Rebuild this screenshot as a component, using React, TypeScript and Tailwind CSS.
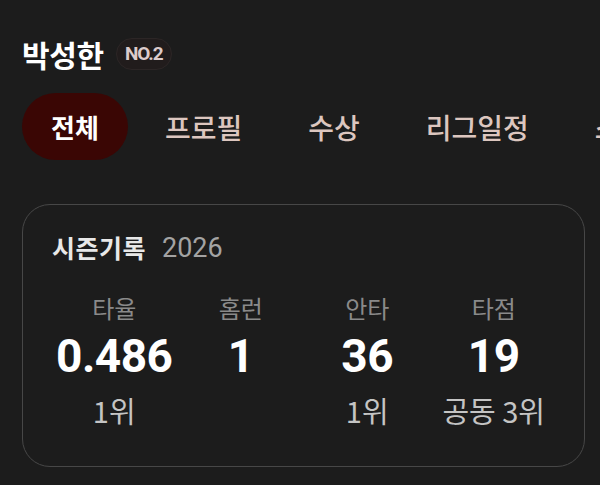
const tabs = ["전체", "프로필", "수상", "리그일정", "스탯"];

const stats = [
  { label: "타율", value: "0.486", rank: "1위" },
  { label: "홈런", value: "1", rank: "" },
  { label: "안타", value: "36", rank: "1위" },
  { label: "타점", value: "19", rank: "공동 3위" },
];

export default function App() {
  return (
    <div
      className="w-[600px] h-[485px] overflow-hidden bg-[#1c1c1c] text-white"
      style={{ fontFamily: '"Noto Sans CJK KR", Roboto, sans-serif' }}
    >
      {/* player header */}
      <div className="flex items-center gap-[12px] pl-[22px] pt-[34px]">
        <h1 className="text-[30px] font-bold leading-[40px] tracking-[-0.3px]">박성한</h1>
        <span
          className="rounded-full bg-[#211c1c] border border-[#2c2626] px-[8px] py-[4px] text-[19px] font-bold leading-[22px] text-[#dccbcb] tracking-[-1px]"
          style={{ fontFamily: "Roboto, sans-serif" }}
        >
          NO.2
        </span>
      </div>

      {/* tabs */}
      <div className="mt-[19px] flex items-center pl-[22px] whitespace-nowrap">
        {tabs.map((t, i) => (
          <button
            key={t}
            className={
              i === 0
                ? "mr-[4px] h-[67px] w-[106px] shrink-0 rounded-full bg-[#3a0604] text-[26px] font-bold text-white"
                : "h-[67px] shrink-0 px-[33px] text-[28px] font-medium text-[#dcc6bf]"
            }
          >
            {t}
          </button>
        ))}
      </div>

      {/* season record card */}
      <div className="ml-[22px] mt-[44px] w-[563px] h-[263px] rounded-[28px] border border-[#474747] pl-[29px] pr-[27px] pt-[28px]">
        <div className="flex items-center gap-[16px] h-[30px]">
          <span className="text-[25px] font-bold text-[#e8e8e8] tracking-[0.5px]">시즌기록</span>
          <span className="text-[27px] text-[#a3a3a3]" style={{ fontFamily: "Roboto, sans-serif" }}>
            2026
          </span>
        </div>
        <div className="mt-[29px] -ml-[1px] grid grid-cols-4">
          {stats.map((s) => (
            <div key={s.label} className="flex flex-col items-center">
              <span className="text-[24px] leading-[32px] text-[#8a8a8a]">{s.label}</span>
              <span
                className="mt-[7px] text-[46px] font-bold leading-[50px] tracking-[-0.5px]"
                style={{ fontFamily: "Roboto, sans-serif" }}
              >
                {s.value}
              </span>
              <span className="mt-[11px] h-[36px] text-[29px] leading-[36px] text-[#c4c4c4]">{s.rank}</span>
            </div>
          ))}
        </div>
      </div>
    </div>
  );
}
